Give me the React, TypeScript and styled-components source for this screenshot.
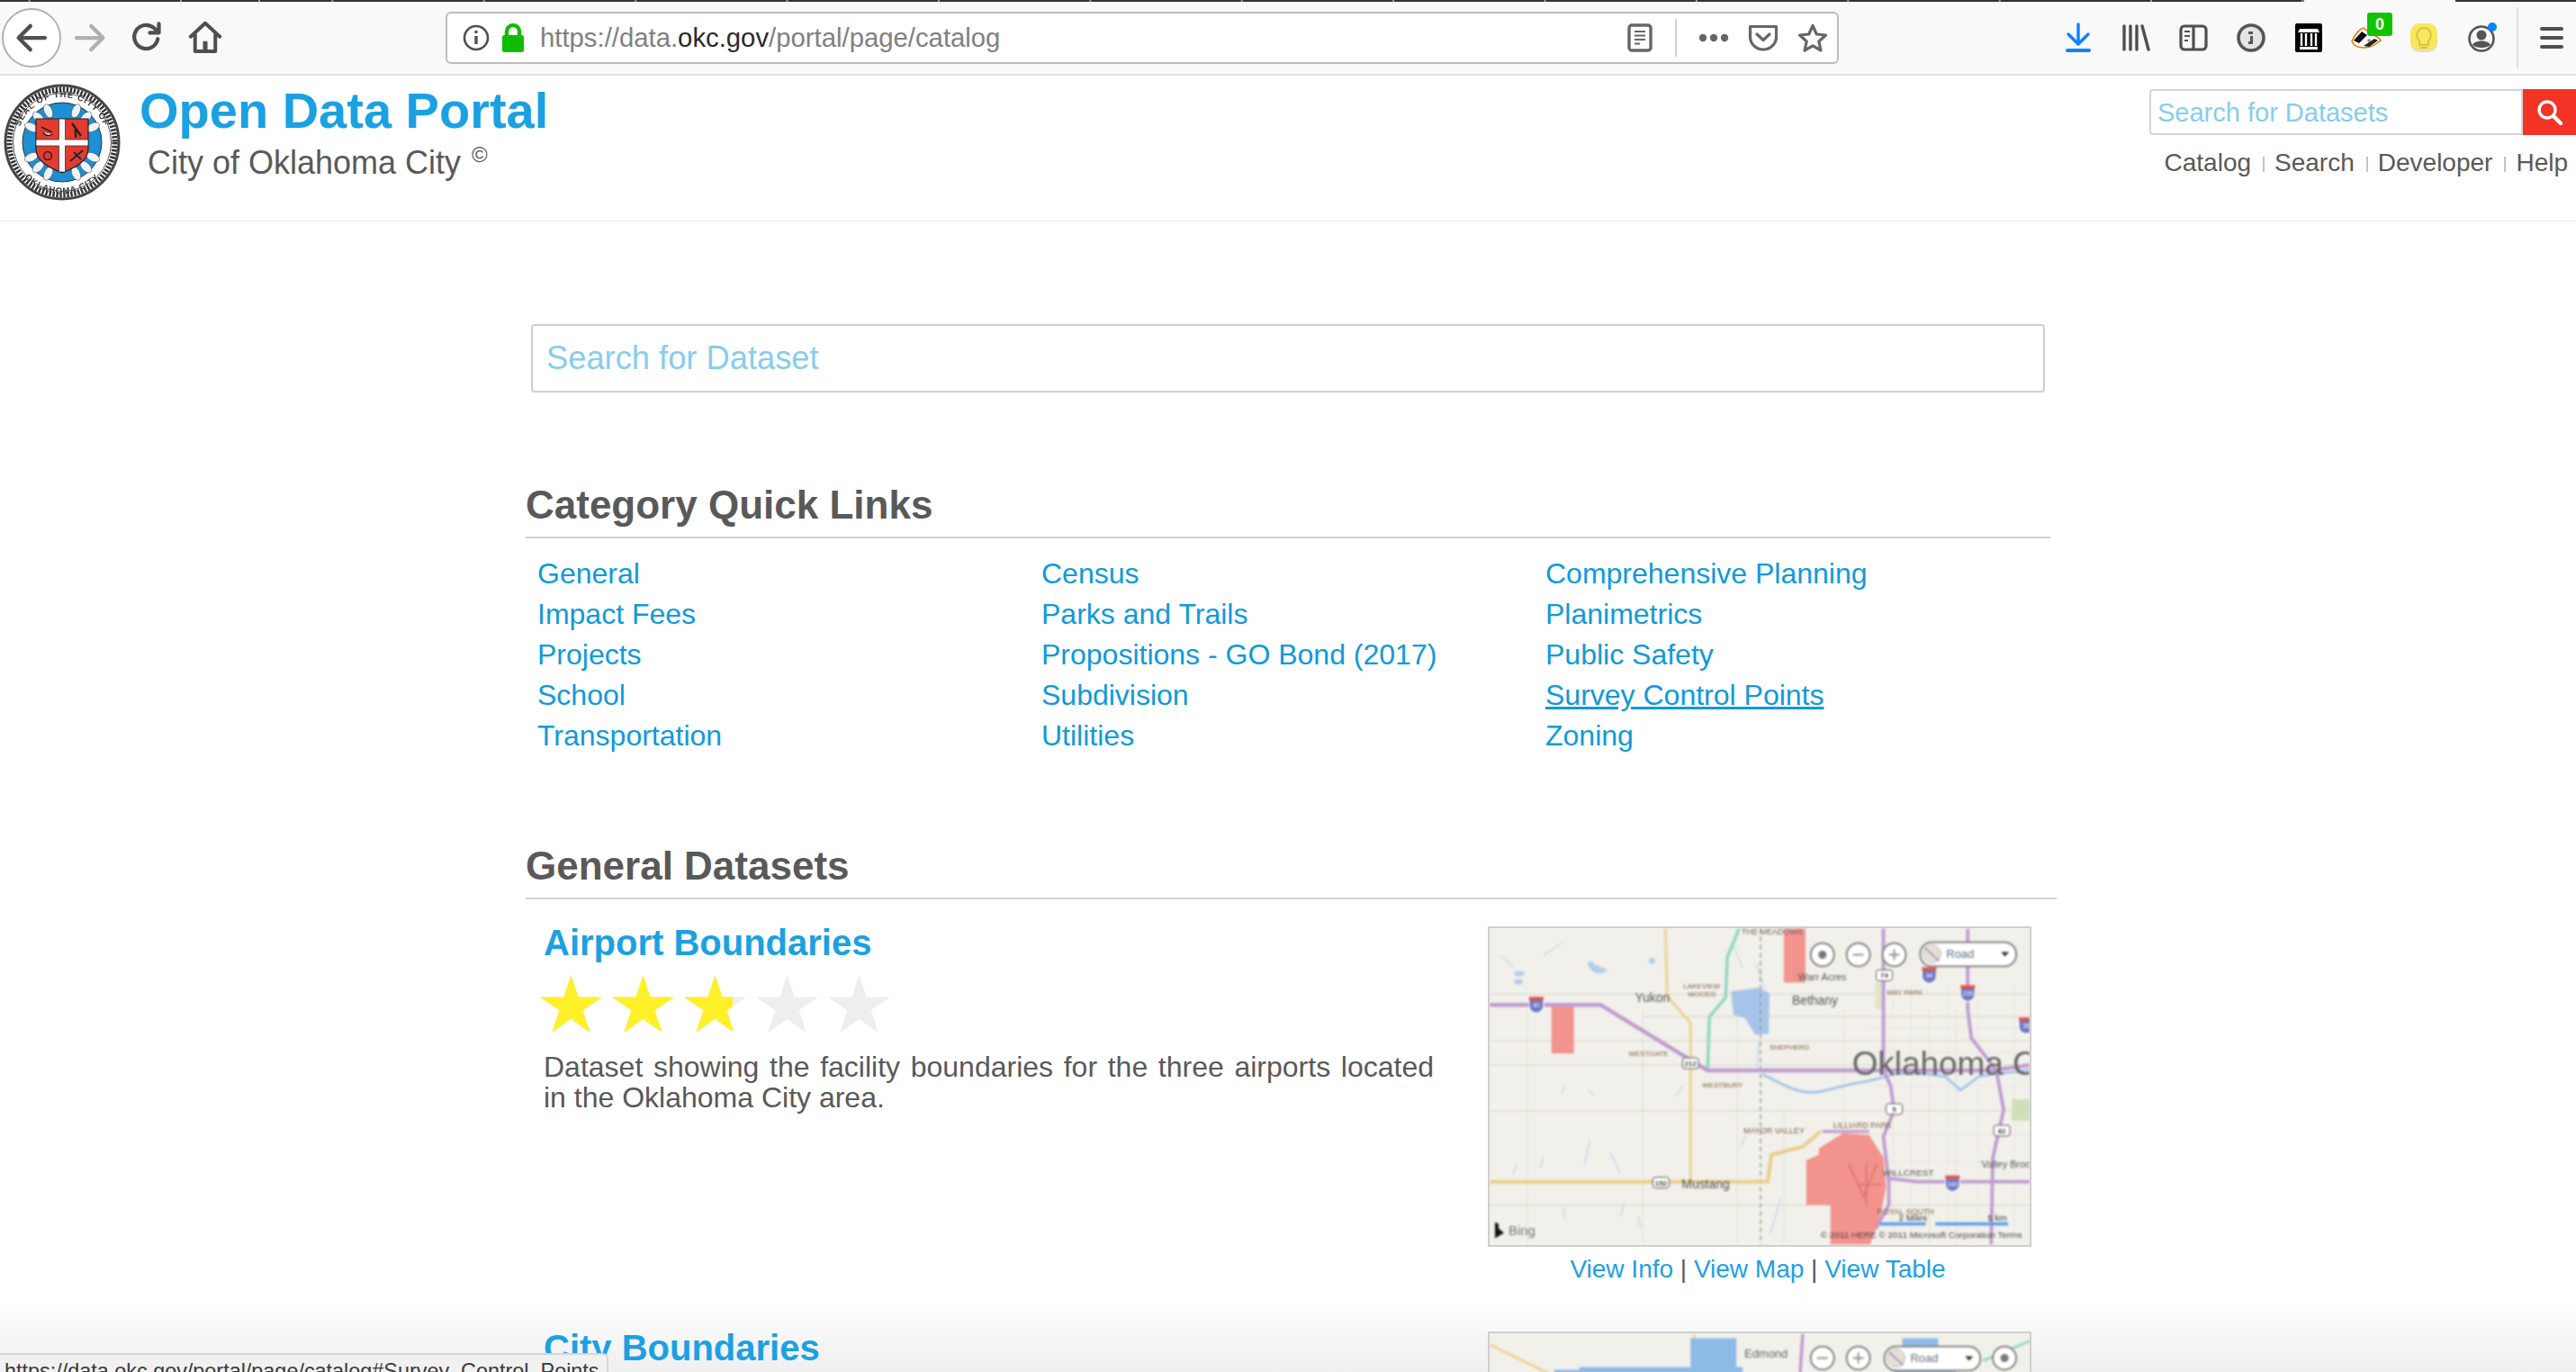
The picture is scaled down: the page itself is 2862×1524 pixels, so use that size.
import React from 'react';
import styled, { createGlobalStyle } from 'styled-components';

const GlobalStyle = createGlobalStyle`
    html, body {
        margin: 0;
        padding: 0;
        height: 1524px;
        overflow: hidden;
        background: #fff;
        font-family: "Liberation Sans", Arial, sans-serif;
        color: #595959;
    }
    * { box-sizing: border-box; }
    input::placeholder { color: #86cdee; opacity: 1; }
`;

const Page = styled.div`
    position: relative;
    width: 2862px;
    height: 1524px;
    overflow: hidden;
    background: linear-gradient(to bottom, #fff 0, #fff 1440px, #efefef 1524px);
`;

/* browser chrome */
const TabStrip = styled.div`
    height: 2px;
    background:
        linear-gradient(#f9f9fa, #f9f9fa) 2560px 0 / 168px 2px no-repeat,
        linear-gradient(#9a9a9a, #9a9a9a) 287px 0 / 2px 2px no-repeat,
        linear-gradient(to right, #333 0, #333 166.4px, #9a9a9a 166.4px) 33.6px 0 / 168.4px 2px repeat-x;
`;
const Toolbar = styled.div`
    height: 82px;
    background: #f9f9fa;
    border-bottom: 2px solid #e2e2e3;
    display: flex;
    align-items: center;
    padding-left: 2px;
`;
const ToolButton = styled.div<{ $width?: number }>`
    width: ${(p) => p.$width ?? 64}px;
    height: 64px;
    flex: none;
    display: flex;
    align-items: center;
    justify-content: center;
    position: relative;
`;
const BackButton = styled.div`
    width: 66px;
    height: 66px;
    flex: none;
    border-radius: 50%;
    border: 2px solid #b1b1b3;
    background: #fff;
    display: flex;
    align-items: center;
    justify-content: center;
`;
const UrlBar = styled.div`
    width: 1548px;
    height: 58px;
    margin-left: 235px;
    flex: none;
    background: #fff;
    border: 2px solid #bcbcbc;
    border-radius: 6px;
    display: flex;
    align-items: center;
    padding-left: 16px;
`;
const UrlText = styled.div`
    font-size: 29.3px;
    color: #808080;
    margin-left: 16px;
    flex: 1;
    white-space: nowrap;
    b { font-weight: 400; color: #2a2a2e; }
`;
const UrlActions = styled.div`
    display: flex;
    align-items: center;
    padding-right: 6px;
`;
const ToolDivider = styled.div`
    width: 2px;
    height: 42px;
    background: #d0d0d1;
    margin: 0 20px 0 19px;
`;
const RightTools = styled.div`
    display: flex;
    align-items: center;
    margin-left: 234px;
`;
const MenuDivider = styled.div`
    width: 2px;
    height: 68px;
    background: #e0e0e1;
    margin-left: 7px;
`;
const CountBadge = styled.span`
    position: absolute;
    left: 33px;
    top: 4px;
    width: 28px;
    height: 26px;
    background: #11c400;
    border-radius: 3px;
    color: #fff;
    font-size: 18px;
    font-weight: 700;
    line-height: 26px;
    text-align: center;
`;

/* site header */
const SiteHeader = styled.header`
    height: 162px;
    border-bottom: 2px solid #f4f4f4;
    display: flex;
    padding: 9px 9px 0 4px;
`;
const Seal = styled.svg`
    width: 130px;
    height: 130px;
    flex: none;
    filter: blur(0.5px);
`;
const Brand = styled.div`
    margin-left: 21px;
`;
const SiteTitle = styled.div`
    font-size: 56px;
    font-weight: 700;
    color: #1ba1e2;
    line-height: 60px;
`;
const SiteSub = styled.div`
    font-size: 36px;
    line-height: 44px;
    margin: 6px 0 0 9px;
    sup { font-size: 24px; line-height: 0; margin-left: 2px; vertical-align: 13px; }
`;
const HeaderRight = styled.div`
    margin-left: auto;
    display: flex;
    flex-direction: column;
    align-items: flex-end;
`;
const HeaderSearch = styled.div`
    display: flex;
    margin: 6px -9px 0 0;
`;
const HeaderInput = styled.input`
    width: 415px;
    height: 51px;
    border: 2px solid #d4d4d4;
    border-radius: 4px 0 0 4px;
    padding: 2px 7px 0;
    font: 29px "Liberation Sans", Arial, sans-serif;
    outline: none;
`;
const RedButton = styled.div`
    width: 59px;
    height: 51px;
    background: #f23325;
    display: flex;
    align-items: center;
    justify-content: center;
`;
const HeaderNav = styled.nav`
    display: flex;
    align-items: center;
    height: 34px;
    margin-top: 14px;
    font-size: 28px;
    white-space: nowrap;
`;
const NavSep = styled.span`
    width: 2px;
    height: 17px;
    background: #c4c4c4;
    margin: 2px 11px 0 13px;
`;

/* page body */
const Content = styled.main`
    padding-left: 584px;
`;
const BigSearch = styled.input`
    display: block;
    width: 1682px;
    height: 76px;
    margin: 114px 0 0 6px;
    border: 2px solid #cfcfcf;
    border-radius: 4px;
    padding: 0 15px;
    font: 36.3px "Liberation Sans", Arial, sans-serif;
    outline: none;
`;
const SectionTitle = styled.h2<{ $width: number; $top: number }>`
    width: ${(p) => p.$width}px;
    margin: ${(p) => p.$top}px 0 0;
    padding-bottom: 10px;
    border-bottom: 2px solid #d2d2d2;
    font-size: 44px;
    line-height: 50px;
    font-weight: 700;
    color: #595959;
`;
const QuickLinks = styled.div`
    display: grid;
    grid-template-columns: repeat(3, 560px);
    grid-auto-rows: 45px;
    margin-top: 17px;
    padding-left: 13px;
`;
const QuickLink = styled.a<{ $hover?: boolean }>`
    font-size: 32px;
    line-height: 45px;
    color: #0f9ad9;
    text-decoration: ${(p) => (p.$hover ? 'underline' : 'none')};
`;
const DatasetCard = styled.article<{ $top: number }>`
    display: grid;
    grid-template-columns: 989px 607px;
    column-gap: 60px;
    margin-top: ${(p) => p.$top}px;
    padding-left: 20px;
`;
const DatasetTitle = styled.a`
    display: block;
    font-size: 40px;
    font-weight: 700;
    line-height: 44px;
    color: #1ba1e2;
`;
const Rating = styled.div`
    position: relative;
    width: 400px;
    height: 64px;
    margin: 14px 0 21px -4px;
`;
const StarRow = styled.div<{ $fill?: boolean }>`
    display: flex;
    gap: 11px;
    width: 400px;
    color: ${(p) => (p.$fill ? '#fff02a' : '#eeeef1')};
`;
const StarShape = styled.svg`
    flex: none;
    width: 69px;
    height: 64px;
`;
const StarClip = styled.div`
    position: absolute;
    left: 0;
    top: 0;
    height: 64px;
    overflow: hidden;
`;
const Description = styled.p`
    margin: 0;
    font-size: 32px;
    line-height: 34px;
    text-align: justify;
    color: #595959;
`;
const MapColumn = styled.div`
    margin-top: 4px;
`;
const MapFrame = styled.div`
    width: 604px;
    height: 356px;
    border: 2px solid #cfcfcf;
    overflow: hidden;
    background: #f1f0ea;
`;
const MapSvg = styled.svg`
    display: block;
    width: 600px;
    height: 352px;
    filter: blur(1px);
    font-family: "Liberation Sans", Arial, sans-serif;
`;
const MapLinks = styled.div`
    width: 604px;
    margin: 8px 0 0 -2px;
    text-align: center;
    font-size: 28px;
    line-height: 34px;
    color: #595959;
    a { color: #1ba1e2; }
`;

/* over the page */
const StatusPanel = styled.div`
    position: absolute;
    left: -2px;
    top: 1503px;
    width: 678px;
    height: 40px;
    background: #f1f1f1;
    border: 2px solid #d6d6d6;
    border-radius: 0 6px 0 0;
    padding: 3px 0 0 5px;
    font-size: 23.4px;
    line-height: 30px;
    white-space: nowrap;
    color: #3a3a3a;
`;

const ic = '#4f4f52';

const Glyph = ({ d, color = ic, width = 3.4, size = 40, box = 32 }: { d: string; color?: string; width?: number; size?: number; box?: number }) => (
    <svg width={size} height={size} viewBox={`0 0 ${box} ${box}`} fill="none" stroke={color} strokeWidth={width} strokeLinecap="round" strokeLinejoin="round">
        <path d={d} />
    </svg>
);

const Star = () => (
    <StarShape viewBox="0 0 69 64">
        <polygon fill="currentColor" points="34.5,0 42.6,24.5 69,24.5 47.6,39.6 55.7,64 34.5,49 13.3,64 21.4,39.6 0,24.5 26.4,24.5" />
    </StarShape>
);

function CitySeal() {
    const leaves = [-64, -44, -24, 24, 44, 64, 116, 136, 156, 204, 224, 244];
    return (
        <Seal viewBox="0 0 130 130">
            <defs>
                <path id="sealTop" d="M 15 65 A 50 50 0 0 1 115 65" />
                <path id="sealBottom" d="M 8 65 A 57 57 0 0 0 122 65" />
            </defs>
            <circle cx="65" cy="65" r="63" fill="#fff" stroke="#444" strokeWidth="3" />
            <circle cx="65" cy="65" r="58.5" fill="none" stroke="#333" strokeWidth="6" strokeDasharray="2.4 1.6" />
            <circle cx="65" cy="65" r="54.5" fill="#fff" stroke="#555" strokeWidth="1" />
            <text fontSize="9.5" fontWeight="700" fill="#333" letterSpacing="1">
                <textPath href="#sealTop" startOffset="50%" textAnchor="middle">SEAL OF THE CITY OF</textPath>
            </text>
            <text fontSize="9.5" fontWeight="700" fill="#333" letterSpacing="1">
                <textPath href="#sealBottom" startOffset="50%" textAnchor="middle">OKLAHOMA CITY</textPath>
            </text>
            <circle cx="65" cy="65" r="44" fill="#1d8fd2" stroke="#333" strokeWidth="1" />
            {leaves.map((a) => (
                <ellipse key={a} cx="65" cy="27" rx="4.5" ry="8" fill="#eef3f5" stroke="#345" strokeWidth=".5" transform={`rotate(${a} 65 65)`} />
            ))}
            <path d="M36 39 H94 V72 C94 86 80 93 65 99 C50 93 36 86 36 72 Z" fill="#e33b30" stroke="#222" strokeWidth="1.2" />
            <path d="M61.5 39 H68.5 V62 H94 V69 H68.5 V98 H61.5 V69 H36 V62 H61.5 Z" fill="#fff" stroke="#333" strokeWidth=".8" />
            <path d="M42 48 L54 54 M44 54 A6 5 0 0 0 54 56" stroke="#222" strokeWidth="1.6" fill="#f5f5f5" />
            <path d="M76 44 L86 58 M80 50 V60" stroke="#222" strokeWidth="2.4" />
            <circle cx="49" cy="80" r="4.5" fill="none" stroke="#222" strokeWidth="1.4" />
            <path d="M74 86 L88 74 M78 76 L86 84" stroke="#222" strokeWidth="1.8" />
        </Seal>
    );
}

const mapLine = (d: string, color: string, w: number, key: string, dash?: string) => (
    <path key={key} d={d} fill="none" stroke={color} strokeWidth={w} strokeDasharray={dash} strokeLinejoin="round" />
);

const Shield = ({ x, y, label }: { x: number; y: number; label: string }) => (
    <g>
        <path d={`M${x - 8} ${y - 6} h16 v7 a8 8 0 0 1 -16 0 Z`} fill="#7078c4" stroke="#fff" strokeWidth="1.2" />
        <rect x={x - 8} y={y - 9} width="16" height="4" fill="#e0524a" />
        <text x={x} y={y + 3} fontSize="7" fill="#fff" textAnchor="middle">{label}</text>
    </g>
);
const RoadTag = ({ x, y, label }: { x: number; y: number; label: string }) => (
    <g>
        <rect x={x - 9} y={y - 6} width="18" height="12" rx="3" fill="#fff" stroke="#555" />
        <text x={x} y={y + 3} fontSize="8" fontWeight="700" fill="#444" textAnchor="middle">{label}</text>
    </g>
);
const MapCircle = ({ x, y, mark }: { x: number; y: number; mark: 'plus' | 'minus' | 'dot' }) => (
    <g>
        <circle cx={x} cy={y} r="13" fill="#fff" stroke="#777" strokeWidth="1.8" />
        {mark === 'dot' ? <circle cx={x} cy={y} r="4.5" fill="#777" /> : <path d={`M${x - 6} ${y} h12`} stroke="#888" strokeWidth="1.8" />}
        {mark === 'plus' && <path d={`M${x} ${y - 6} v12`} stroke="#888" strokeWidth="1.8" />}
    </g>
);
const RoadSelect = ({ x, y }: { x: number; y: number }) => (
    <g>
        <rect x={x} y={y} width="107" height="27" rx="13" fill="#fff" stroke="#777" strokeWidth="1.8" />
        <circle cx={x + 13} cy={y + 13} r="10" fill="#e6e0d4" stroke="#999" strokeDasharray="2 1" />
        <path d={`M${x + 5} ${y + 6} L${x + 21} ${y + 21}`} stroke="#b79ac8" strokeWidth="2" />
        <text x={x + 29} y={y + 18} fontSize="13" fill="#5a6b86">Road</text>
        <path d={`M${x + 90} ${y + 11} h9 l-4.5 5 Z`} fill="#333" />
    </g>
);

const creeks = [
    'M120 40 l8 10', 'M12 30 l14 12', 'M60 30 l20 -14', 'M84 175 l-4 10', 'M110 180 l6 6', 'M112 235 l-6 28', 'M135 250 l10 22',
    'M60 255 l-4 12', 'M30 262 l-4 12', 'M82 310 l2 14', 'M150 305 l-4 16', 'M215 175 l-8 12', 'M285 230 l-4 12', 'M300 125 l-2 30',
    'M298 40 l8 26', 'M272 20 l10 24', 'M325 300 l-12 40', 'M165 320 l4 14',
];

function AirportMap() {
    const labels: [number, number, number, string, string][] = [
        [281, 6, 9, '#6f625a', 'THE MEADOWS'],
        [216, 67, 8, '#7d5f44', 'LAKEVIEW'],
        [221, 76, 8, '#7d5f44', 'WOODS'],
        [162, 82, 14, '#555', 'Yukon'],
        [337, 85, 14, '#555', 'Bethany'],
        [344, 58, 11, '#555', 'Warr Acres'],
        [443, 74, 8, '#7d5f44', 'MAY PARK'],
        [155, 142, 8, '#7d5f44', 'WESTGATE'],
        [312, 135, 8, '#7d5f44', 'SHEPHERD'],
        [237, 177, 8, '#7d5f44', 'WESTBURY'],
        [283, 228, 9, '#7d5f44', 'MAYOR VALLEY'],
        [383, 222, 9, '#7d5f44', 'LILLIARD PARK'],
        [214, 289, 14, '#555', 'Mustang'],
        [438, 275, 10, '#555', 'WILLCREST'],
        [548, 266, 11, '#555', 'Valley Brook'],
        [432, 318, 9, '#7d5f44', 'ROYAL SOUTH'],
        [456, 326, 10, '#333', '2 Miles'],
        [555, 326, 10, '#333', '5 km'],
        [369, 345, 10, '#444', '© 2011 HERE © 2011 Microsoft Corporation  Terms'],
    ];
    return (
        <MapSvg viewBox="0 0 602 352">
            <rect width="602" height="352" fill="#f1f0ea" />
            {[73, 98, 125, 152, 203, 308].map((y) => mapLine(`M${y === 98 ? 171 : 0} ${y} H602`, '#dedcd0', 1.3, `h${y}`))}
            {[42, 171, 276, 328, 395, 490, 520].map((x) => mapLine(`M${x} ${x === 328 ? 200 : 90} V352`, '#e3e1d6', 1.1, `v${x}`))}
            {[450, 470, 510, 545, 585].map((x) => mapLine(`M${x} 60 V340`, '#e8e6dc', 1, `g${x}`))}
            {[110, 138, 175, 230, 260].map((y) => mapLine(`M420 ${y} H602`, '#e8e6dc', 1, `k${y}`))}
            {creeks.map((d) => mapLine(d, '#c8daee', 1.5, d))}
            <path d="M269 70 L300 66 L312 72 L311 117 L296 118 L285 100 L272 96 Z" fill="#a6c4ea" />
            <path d="M109 38 Q114 34 118 41 Q124 42 132 46 L124 50 Q112 50 109 38 Z" fill="#b3cdea" />
            <ellipse cx="33" cy="50" rx="6" ry="3" fill="#b3cdea" />
            <ellipse cx="32" cy="59" rx="5" ry="3" fill="#b3cdea" />
            <circle cx="181" cy="36" r="3.5" fill="#b3cdea" />
            <rect x="582" y="190" width="20" height="24" fill="#cfe0b8" />
            <rect x="430" y="60" width="10" height="30" fill="#dfe6c8" />
            {mapLine('M304 162 C320 170 335 180 353 182 C372 184 385 176 410 172 C425 170 440 165 451 162 C480 160 495 162 508 165 L525 180 L545 165 C570 160 590 160 602 157', '#9cc3e8', 2.6, 'river')}
            {mapLine('M302 0 V352', '#8e8e86', 1.3, 'county', '5 4')}
            {mapLine('M196 0 L198 75 L224 105 V282', '#edd59a', 3.2, 'hwyA')}
            {mapLine('M0 282 H310 L314 252 L349 243 L369 226', '#e8cf8c', 4, 'hwyB')}
            {mapLine('M278 0 L265 32 L263 77 L245 98 L243 158', '#8ed8c0', 3.4, 'turnpike')}
            {mapLine('M0 85 H124 L243 158 H560 L602 152', '#c09cd2', 4.4, 'i40')}
            {mapLine('M439 0 V158 L447 175 L451 202 L439 232 L445 282 V308 L430 335', '#c09cd2', 3.8, 'i44')}
            {mapLine('M533 0 V90 L537 122 L565 158 L573 202 L561 255 L559 352', '#c09cd2', 3.8, 'i35')}
            {mapLine('M443 278 L476 282 H602', '#c09cd2', 3.8, 'i240')}
            {mapLine('M371 226 H423', '#c09cd2', 3.4, 'lilliard')}
            <g fill="#f28d88" fillOpacity=".95">
                <rect x="328" y="0" width="24" height="60" />
                <rect x="69" y="87" width="25" height="52" />
                <path d="M394 228 L423 230 L439 255 L442 288 L435 322 L424 352 H380 V308 H353 V258 L367 252 V245 L378 238 Z" />
            </g>
            <path d="M400 262 L418 300 M432 262 L416 300 M410 285 H436 M420 262 V310" stroke="#dc7a72" strokeWidth="2" fill="none" />
            {labels.map(([x, y, s, c, t]) => (
                <text key={t} x={x} y={y} fontSize={s} fill={c}>{t}</text>
            ))}
            <text x="404" y="163" fontSize="37" fill="#666">Oklahoma C</text>
            <text x="21" y="342" fontSize="15" fill="#777">Bing</text>
            <path d="M6 327 L6 345 L16 339 L10 334 L10 329 Z" fill="#111" />
            <Shield x={52} y={85} label="40" />
            <Shield x={490} y={52} label="44" />
            <Shield x={533} y={72} label="235" />
            <Shield x={516} y={284} label="240" />
            <Shield x={598} y={108} label="35" />
            <RoadTag x={224} y={150} label="212" />
            <RoadTag x={440} y={52} label="74" />
            <RoadTag x={451} y={201} label="5" />
            <RoadTag x={571} y={225} label="62" />
            <RoadTag x={191} y={283} label="152" />
            <path d="M435 329 H486 M497 329 H578" stroke="#58a0ee" strokeWidth="3.4" />
            <MapCircle x={371} y={29} mark="dot" />
            <MapCircle x={411} y={29} mark="minus" />
            <MapCircle x={451} y={29} mark="plus" />
            <RoadSelect x={480} y={15} />
        </MapSvg>
    );
}

function CityMap() {
    return (
        <MapSvg viewBox="0 0 602 352">
            <rect width="602" height="352" fill="#f1f0ea" />
            {mapLine('M0 12 L70 46', '#edd59a', 3, 'a')}
            {mapLine('M228 0 V10', '#edd59a', 3, 'b')}
            {mapLine('M349 0 L346 46', '#c09cd2', 3.5, 'c')}
            {mapLine('M550 30 L602 8', '#8ed8c0', 2.5, 'd')}
            <g fill="#8dbbe8">
                <path d="M224 5 H275 V37 H282 V60 H100 V37 H224 Z" />
                <path d="M460 5 H500 V30 H520 V60 H450 V30 H460 Z" />
                <rect x="72" y="40" width="28" height="20" />
            </g>
            <text x="284" y="27" fontSize="13" fill="#666">Edmond</text>
            <MapCircle x={371} y={27} mark="minus" />
            <MapCircle x={411} y={27} mark="plus" />
            <RoadSelect x={440} y={14} />
            <MapCircle x={574} y={27} mark="dot" />
        </MapSvg>
    );
}

const quickLinks = [
    ['General', 'Census', 'Comprehensive Planning'],
    ['Impact Fees', 'Parks and Trails', 'Planimetrics'],
    ['Projects', 'Propositions - GO Bond (2017)', 'Public Safety'],
    ['School', 'Subdivision', 'Survey Control Points'],
    ['Transportation', 'Utilities', 'Zoning'],
];

function Stars({ rating }: { rating: number }) {
    const row = [0, 1, 2, 3, 4];
    return (
        <Rating>
            <StarRow>{row.map((i) => <Star key={i} />)}</StarRow>
            <StarClip style={{ width: `${(rating / 5) * 100}%` }}>
                <StarRow $fill>{row.map((i) => <Star key={i} />)}</StarRow>
            </StarClip>
        </Rating>
    );
}

export default function App() {
    return (
        <Page>
            <GlobalStyle />
            <TabStrip />
            <Toolbar>
                <BackButton>
                    <Glyph d="M28 16 H5 M15 5.5 L4.5 16 L15 26.5" />
                </BackButton>
                <ToolButton>
                    <Glyph d="M4 16 H27 M17 5.5 L27.5 16 L17 26.5" color="#b1b1b3" />
                </ToolButton>
                <ToolButton>
                    <Glyph d="M25 17 A10.5 10.5 0 1 1 21.5 7.2 L26 11 M26 3.5 V11.5 H18" />
                </ToolButton>
                <ToolButton>
                    <svg width="40" height="40" viewBox="0 0 32 32" fill="none" stroke={ic} strokeWidth="3.2" strokeLinejoin="round" strokeLinecap="round">
                        <path d="M3 15 L16 3 L29 15 M7 13 V28 H25 V13" />
                        <rect x="14" y="19" width="4" height="8" fill={ic} stroke="none" />
                    </svg>
                </ToolButton>
                <UrlBar>
                    <svg width="32" height="32" viewBox="0 0 32 32" fill="none" stroke={ic} strokeWidth="2.6">
                        <circle cx="16" cy="16" r="13" />
                        <path d="M16 14 V23" strokeWidth="3.4" />
                        <circle cx="16" cy="9.5" r="1.8" fill={ic} stroke="none" />
                    </svg>
                    <svg width="28" height="34" viewBox="0 0 28 34" style={{ marginLeft: 11 }}>
                        <path d="M7 15 V10 A7 7 0 0 1 21 10 V15" fill="none" stroke="#12bc00" strokeWidth="4.4" />
                        <rect x="2" y="14" width="24" height="19" rx="2.5" fill="#12bc00" />
                    </svg>
                    <UrlText>https://data.<b>okc.gov</b>/portal/page/catalog</UrlText>
                    <UrlActions>
                        <ToolButton $width={40}>
                            <svg width="28" height="32" viewBox="0 0 28 32" fill="none" stroke="#666" strokeWidth="3.4">
                                <rect x="2" y="2" width="24" height="28" rx="3" />
                                <path d="M8 9 H20 M8 13.5 H20 M8 18 H20 M8 22.5 H14" strokeWidth="2" />
                            </svg>
                        </ToolButton>
                        <ToolDivider />
                        <ToolButton $width={42}>
                            <svg width="34" height="10" viewBox="0 0 34 10" fill="#666">
                                <circle cx="5" cy="5" r="4.2" />
                                <circle cx="17" cy="5" r="4.2" />
                                <circle cx="29" cy="5" r="4.2" />
                            </svg>
                        </ToolButton>
                        <ToolButton $width={68}>
                            <svg width="34" height="30" viewBox="0 0 34 30" fill="none" stroke="#666" strokeWidth="3.2" strokeLinejoin="round" strokeLinecap="round">
                                <path d="M2.5 2.5 H31.5 V14 A14.5 14 0 0 1 2.5 14 Z" />
                                <path d="M10 11 L17 17.5 L24 11" />
                            </svg>
                        </ToolButton>
                        <ToolButton $width={42}>
                            <svg width="34" height="32" viewBox="0 0 34 32" fill="none" stroke="#666" strokeWidth="3.2" strokeLinejoin="round">
                                <polygon points="17,2.5 21.3,12 31.5,13 23.8,20 26,30 17,24.8 8,30 10.2,20 2.5,13 12.7,12" />
                            </svg>
                        </ToolButton>
                    </UrlActions>
                </UrlBar>
                <RightTools>
                    <ToolButton>
                        <svg width="30" height="34" viewBox="0 0 30 34" fill="none" stroke="#0a84ff" strokeWidth="3.4" strokeLinecap="round" strokeLinejoin="round">
                            <path d="M15 2 V23 M4 13 L15 24 L26 13" />
                            <path d="M3 31 H27" strokeWidth="4" />
                        </svg>
                    </ToolButton>
                    <ToolButton>
                        <svg width="32" height="32" viewBox="0 0 32 32" fill="none" stroke={ic} strokeWidth="3.4" strokeLinecap="round">
                            <path d="M3 3 V29 M10 3 V29 M17 3 V29 M23 3 L30 29" />
                        </svg>
                    </ToolButton>
                    <ToolButton>
                        <svg width="32" height="32" viewBox="0 0 32 32" fill="none" stroke={ic} strokeWidth="3.2">
                            <rect x="2" y="3" width="28" height="26" rx="4" />
                            <path d="M16 3 V29" />
                            <path d="M6 9 H12 M6 14 H12 M6 19 H10" strokeWidth="2.2" />
                        </svg>
                    </ToolButton>
                    <ToolButton>
                        <svg width="32" height="32" viewBox="0 0 32 32">
                            <circle cx="16" cy="16" r="14" fill="#e4e4e4" stroke="#555" strokeWidth="3.6" />
                            <path d="M13 9 H18 V12 H13 Z M15 14 H18 V23 H13 V20 H15 Z" fill="#555" />
                        </svg>
                    </ToolButton>
                    <ToolButton>
                        <svg width="30" height="32" viewBox="0 0 30 32">
                            <rect width="30" height="32" rx="2" fill="#000" />
                            <path d="M5 6 H25 L27 10 H3 Z M5 26 H25 V29 H5 Z" fill="#fff" />
                            <path d="M7 11 V25 M12 11 V25 M18 11 V25 M23 11 V25" stroke="#fff" strokeWidth="2.4" />
                        </svg>
                    </ToolButton>
                    <ToolButton>
                        <svg width="34" height="24" viewBox="0 0 34 24">
                            <path d="M1 16 C4 8 10 2 14 1 L20 6 C26 9 32 12 33 15 C28 19 22 23 15 23 C9 23 3 21 1 16 Z" fill="#fff" stroke="#e8790c" strokeWidth="1.5" />
                            <path d="M3 15 L12 5 L18 9 L9 18 Z" fill="#111" />
                            <path d="M14 21 L26 13 L30 15 L20 22 Z" fill="#222" />
                            <circle cx="20" cy="15" r="1.8" fill="#888" />
                        </svg>
                        <CountBadge>0</CountBadge>
                    </ToolButton>
                    <ToolButton>
                        <svg width="32" height="34" viewBox="0 0 32 34">
                            <rect x="1" y="2" width="30" height="31" rx="10" fill="#dcdcdc" />
                            <rect x="1" y="1" width="30" height="30" rx="10" fill="#f7e75c" />
                            <path d="M16 6 A8 8 0 0 0 11 20 V25 H21 V20 A8 8 0 0 0 16 6 Z" fill="none" stroke="#d8c244" strokeWidth="2" />
                            <path d="M12 28 H20" stroke="#d8c244" strokeWidth="2" />
                        </svg>
                    </ToolButton>
                    <ToolButton>
                        <svg width="36" height="36" viewBox="0 0 36 36">
                            <circle cx="18" cy="19" r="13.5" fill="none" stroke="#555" strokeWidth="2.6" />
                            <circle cx="18" cy="15" r="5.5" fill="#555" />
                            <path d="M8 26 C10 20 26 20 28 26 C24 30 12 30 8 26 Z" fill="#555" />
                            <circle cx="30" cy="6" r="5" fill="#0a84ff" />
                        </svg>
                    </ToolButton>
                    <MenuDivider />
                    <ToolButton $width={74}>
                        <svg width="28" height="26" viewBox="0 0 28 26" stroke={ic} strokeWidth="4" strokeLinecap="round">
                            <path d="M3 3 H25 M3 13 H25 M3 23 H25" />
                        </svg>
                    </ToolButton>
                </RightTools>
            </Toolbar>

            <SiteHeader>
                <CitySeal />
                <Brand>
                    <SiteTitle>Open Data Portal</SiteTitle>
                    <SiteSub>City of Oklahoma City <sup>©</sup></SiteSub>
                </Brand>
                <HeaderRight>
                    <HeaderSearch>
                        <HeaderInput placeholder="Search for Datasets" />
                        <RedButton>
                            <svg width="32" height="32" viewBox="0 0 32 32" fill="none" stroke="#fff" strokeWidth="3.4" strokeLinecap="round">
                                <circle cx="13" cy="13" r="9" />
                                <path d="M20 20 L28 28" strokeWidth="4.4" />
                            </svg>
                        </RedButton>
                    </HeaderSearch>
                    <HeaderNav>
                        Catalog<NavSep />Search<NavSep />Developer<NavSep />Help
                    </HeaderNav>
                </HeaderRight>
            </SiteHeader>

            <Content>
                <BigSearch placeholder="Search for Dataset" />
                <SectionTitle $width={1694} $top={100}>Category Quick Links</SectionTitle>
                <QuickLinks>
                    {quickLinks.flat().map((name) => (
                        <QuickLink key={name} $hover={name === 'Survey Control Points'}>{name}</QuickLink>
                    ))}
                </QuickLinks>
                <SectionTitle $width={1701} $top={97}>General Datasets</SectionTitle>
                <DatasetCard $top={26}>
                    <div>
                        <DatasetTitle>Airport Boundaries</DatasetTitle>
                        <Stars rating={2.67} />
                        <Description>
                            Dataset showing the facility boundaries for the three airports located in the Oklahoma City area.
                        </Description>
                    </div>
                    <MapColumn>
                        <MapFrame><AirportMap /></MapFrame>
                        <MapLinks><a>View Info</a> | <a>View Map</a> | <a>View Table</a></MapLinks>
                    </MapColumn>
                </DatasetCard>
                <DatasetCard $top={48}>
                    <div>
                        <DatasetTitle>City Boundaries</DatasetTitle>
                    </div>
                    <MapColumn>
                        <MapFrame><CityMap /></MapFrame>
                    </MapColumn>
                </DatasetCard>
            </Content>

            <StatusPanel>https://data.okc.gov/portal/page/catalog#Survey_Control_Points</StatusPanel>
        </Page>
    );
}
